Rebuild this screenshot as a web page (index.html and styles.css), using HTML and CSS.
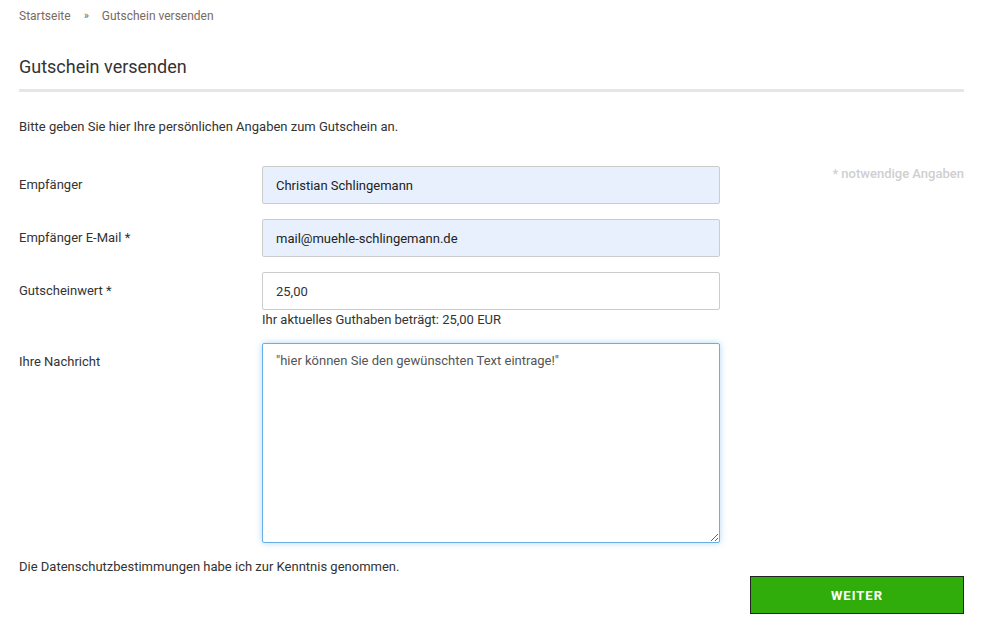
FILE: index.html
```html
<!DOCTYPE html>
<html lang="de">
<head>
<meta charset="utf-8">
<title>Gutschein versenden</title>
<link rel="stylesheet" href="styles.css">
</head>
<body>
<div class="page">
  <nav class="breadcrumb">
    <a href="#">Startseite</a>
    <span class="sep">»</span>
    <span>Gutschein versenden</span>
  </nav>
  <h1 class="title">Gutschein versenden</h1>
  <p class="intro">Bitte geben Sie hier Ihre persönlichen Angaben zum Gutschein an.</p>

  <form class="form">
    <div class="row">
      <label class="label">Empfänger</label>
      <div class="field"><input class="input autofill" type="text" value="Christian Schlingemann"></div>
      <div class="note">* notwendige Angaben</div>
    </div>
    <div class="row">
      <label class="label">Empfänger E-Mail *</label>
      <div class="field"><input class="input autofill" type="text" value="mail@muehle-schlingemann.de"></div>
    </div>
    <div class="row">
      <label class="label">Gutscheinwert *</label>
      <div class="field">
        <input class="input" type="text" value="25,00">
        <div class="help">Ihr aktuelles Guthaben beträgt: 25,00 EUR</div>
      </div>
    </div>
    <div class="row">
      <label class="label">Ihre Nachricht</label>
      <div class="field"><textarea class="textarea">"hier können Sie den gewünschten Text eintrage!"</textarea></div>
    </div>
    <p class="privacy">Die Datenschutzbestimmungen habe ich zur Kenntnis genommen.</p>
    <div class="actions">
      <button class="btn" type="button">WEITER</button>
    </div>
  </form>
</div>
</body>
</html>
```

FILE: styles.css
```css
* { box-sizing: border-box; }
html, body { margin: 0; padding: 0; background: #fff; }
body {
  font-family: Roboto, "Liberation Sans", Arial, sans-serif;
  font-size: 13px;
  color: #333;
}
.page {
  padding: 0 19px;
}
.breadcrumb {
  padding-top: 8px;
  font-size: 12px;
  line-height: 16px;
  color: #7a6a5e;
  display: flex;
  gap: 13px;
}
.breadcrumb a { color: #7a6a5e; text-decoration: none; }
.breadcrumb .sep { font-size: 11px; }
.title {
  margin: 32px 0 0;
  font-size: 18px;
  font-weight: 400;
  line-height: 22px;
  color: #333;
  padding-bottom: 11px;
  border-bottom: 3px solid #e6e6e6;
}
.intro {
  margin: 26px 0 0;
  line-height: 18px;
}
.form {
  margin-top: 30px;
}
.row {
  display: grid;
  grid-template-columns: 243px 458px 1fr;
  margin-bottom: 15px;
}
.label {
  padding-top: 11px;
  line-height: 16px;
}
.field { display: flex; flex-direction: column; }
.input {
  width: 458px;
  height: 38px;
  border: 1px solid #cccccc;
  border-radius: 2px;
  padding: 0 13px;
  font-family: inherit;
  font-size: 13px;
  color: #333;
  background: #fff;
  outline: none;
}
.input.autofill {
  background: #e8f0fe;
  color: #222;
}
.help {
  margin-top: 2px;
  line-height: 16px;
  margin-bottom: 0;
}
.textarea {
  width: 458px;
  height: 200px;
  border: 1px solid #66afe9;
  border-radius: 2px;
  box-shadow: 0 0 6px rgba(102, 175, 233, 0.5);
  padding: 9px 13px;
  font-family: inherit;
  font-size: 13px;
  line-height: 16px;
  color: #555;
  resize: both;
  outline: none;
  display: block;
}
.note {
  justify-self: end;
  line-height: 16px;
  color: #cfcfcf;
  font-weight: 500;
  font-size: 13px;
  padding-top: 0;
}
.privacy {
  margin: 1px 0 0;
  line-height: 18px;
}
.actions {
  display: flex;
  justify-content: flex-end;
  margin-top: 0;
}
.btn {
  width: 214px;
  height: 38px;
  background: #31ad0b;
  border: 1px solid #222;
  color: #fff;
  font-family: inherit;
  font-size: 13px;
  font-weight: 700;
  letter-spacing: 1px;
  cursor: pointer;
}
```
